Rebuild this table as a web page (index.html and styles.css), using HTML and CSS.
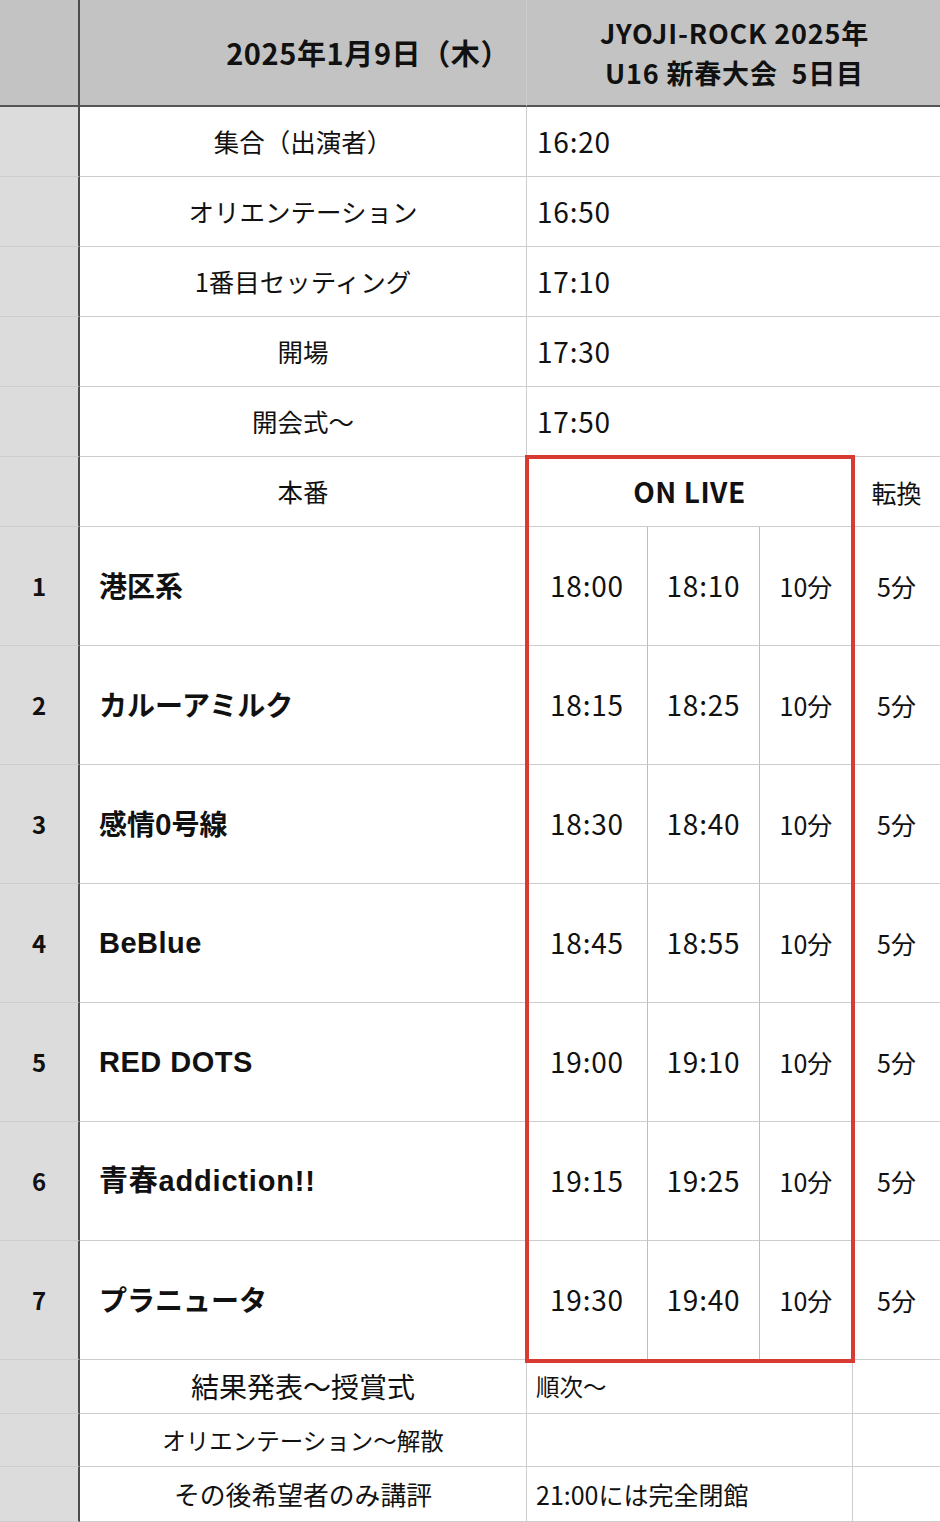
FILE: index.html
```html
<!DOCTYPE html>
<html lang="ja">
<head>
<meta charset="utf-8">
<title>JYOJI-ROCK 2025 U16 新春大会 5日目</title>
<link rel="stylesheet" href="styles.css">
</head>
<body>
<div class="sheet">
  <div class="c hd corner"></div>
  <div class="c hd date">2025年1月9日（木）</div>
  <div class="c hd title span4"><span>JYOJI-ROCK 2025年</span><span>U16 新春大会&nbsp;&nbsp;5日目</span></div>

  <div class="c num"></div>
  <div class="c label">集合（出演者）</div>
  <div class="c time span4">16:20</div>

  <div class="c num"></div>
  <div class="c label">オリエンテーション</div>
  <div class="c time span4">16:50</div>

  <div class="c num"></div>
  <div class="c label">1番目セッティング</div>
  <div class="c time span4">17:10</div>

  <div class="c num"></div>
  <div class="c label">開場</div>
  <div class="c time span4">17:30</div>

  <div class="c num"></div>
  <div class="c label">開会式〜</div>
  <div class="c time span4">17:50</div>

  <div class="c num"></div>
  <div class="c label">本番</div>
  <div class="live">
    <div class="c onlive">ON LIVE</div>
    <div class="c t">18:00</div><div class="c t">18:10</div><div class="c dur">10分</div>
    <div class="c t">18:15</div><div class="c t">18:25</div><div class="c dur">10分</div>
    <div class="c t">18:30</div><div class="c t">18:40</div><div class="c dur">10分</div>
    <div class="c t">18:45</div><div class="c t">18:55</div><div class="c dur">10分</div>
    <div class="c t">19:00</div><div class="c t">19:10</div><div class="c dur">10分</div>
    <div class="c t">19:15</div><div class="c t">19:25</div><div class="c dur">10分</div>
    <div class="c t">19:30</div><div class="c t">19:40</div><div class="c dur">10分</div>
  </div>
  <div class="c change">転換</div>

  <div class="c num">1</div>
  <div class="c band">港区系</div>
  <div class="c change">5分</div>

  <div class="c num">2</div>
  <div class="c band">カルーアミルク</div>
  <div class="c change">5分</div>

  <div class="c num">3</div>
  <div class="c band">感情0号線</div>
  <div class="c change">5分</div>

  <div class="c num">4</div>
  <div class="c band latin">BeBlue</div>
  <div class="c change">5分</div>

  <div class="c num">5</div>
  <div class="c band latin">RED DOTS</div>
  <div class="c change">5分</div>

  <div class="c num">6</div>
  <div class="c band mixed">青春addiction!!</div>
  <div class="c change">5分</div>

  <div class="c num">7</div>
  <div class="c band">プラニュータ</div>
  <div class="c change last">5分</div>

  <div class="c num"></div>
  <div class="c label big">結果発表〜授賞式</div>
  <div class="c note span3 small">順次〜</div>
  <div class="c end"></div>

  <div class="c num"></div>
  <div class="c label small">オリエンテーション〜解散</div>
  <div class="c note span3"></div>
  <div class="c end"></div>

  <div class="c num"></div>
  <div class="c label mid">その後希望者のみ講評</div>
  <div class="c note span3">21:00には完全閉館</div>
  <div class="c end"></div>
</div>
</body>
</html>
```

FILE: styles.css
```css
* { box-sizing: border-box; }
html, body { margin: 0; padding: 0; background: #fff; }
body {
  font-family: "Noto Sans CJK JP", "Noto Sans", sans-serif;
  color: #111;
}
.sheet {
  display: grid;
  grid-template-columns: 80px 447px 121px 112px 93px 87px;
  grid-template-rows: 107px repeat(6, 70px) repeat(7, 119px) 54px 53px 55px;
  width: 940px;
  height: 1522px;
  overflow: hidden;
}
.c {
  border-right: 1px solid #cdcdcd;
  border-bottom: 1px solid #cdcdcd;
  display: flex;
  align-items: center;
  justify-content: center;
  font-size: 24px;
  line-height: 1.2;
  white-space: nowrap;
}
.span4 { grid-column: span 4; border-right: none; }
.span3 { grid-column: span 3; }
.end, .change { border-right: none; }
.hd {
  background: #c3c3c3;
  border-bottom: 2px solid #555;
  font-weight: 700;
}
.num {
  background: #dcdcdc;
  border-right: 2px solid #4d4d4d;
  font-weight: 700;
  font-size: 24px;
}
.corner.hd { border-right: 2px solid #4d4d4d; background: #c3c3c3; }
.date {
  justify-content: flex-end;
  padding-right: 16px;
  font-size: 29px;
  letter-spacing: 0.6px;
}
.title {
  flex-direction: column;
  padding-left: 2px;
  font-size: 27px;
  line-height: 40px;
  letter-spacing: 0.8px;
}
.label { font-size: 25.5px; }
.label.big { font-size: 28px; }
.label.small { font-size: 23.5px; }
.label.mid { font-size: 25.8px; }
.time {
  justify-content: flex-start;
  padding-left: 10px;
  font-size: 28px;
  letter-spacing: 0.8px;
}
.live {
  grid-column: 3 / 6;
  grid-row: span 8;
  display: grid;
  grid-template-columns: 121px 112px 93px;
  grid-template-rows: 70px repeat(7, 119px);
  position: relative;
}
.live::after {
  content: "";
  position: absolute;
  inset: -2px -2px -3px -2px;
  border: 4px solid #d83a34;
  pointer-events: none;
}
.onlive {
  grid-column: span 3;
  font-weight: 700;
  font-size: 28px;
  letter-spacing: 0.5px;
}
.change { font-size: 25px; }
.band {
  justify-content: flex-start;
  padding-left: 19px;
  font-weight: 700;
  font-size: 28px;
  letter-spacing: 0;
}
.band.latin {
  font-family: "Liberation Sans", "Noto Sans CJK JP", sans-serif;
  font-size: 29px;
  letter-spacing: 0.5px;
}
.band.mixed {
  font-family: "Liberation Sans", "Noto Sans CJK JP", sans-serif;
  font-size: 29px;
  letter-spacing: 0.8px;
}
.t {
  border-right-color: #bdbdbd;
  font-size: 28px;
  letter-spacing: 0.8px;
}
.dur { font-size: 25px; }
.note {
  justify-content: flex-start;
  padding-left: 9px;
  font-size: 25px;
}
.note.small { font-size: 23.5px; }
```
